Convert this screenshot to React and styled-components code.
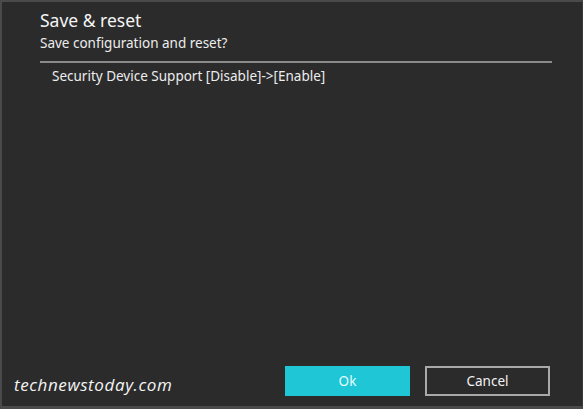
import React from 'react';
import styled, { createGlobalStyle } from 'styled-components';

const Global = createGlobalStyle`
    html, body {
        margin: 0;
        padding: 0;
        background: #2b2b2b;
    }
    body {
        font-family: "Noto Sans", "Open Sans", sans-serif;
    }
`

const Dialog = styled.div`
    box-sizing: border-box;
    width: 583px;
    height: 409px;
    background-color: #2b2b2b;
    border-top: 2px solid #4a4a4a;
    border-left: 2px solid #4a4a4a;
    border-bottom: 3px solid #4a4a4a;
    border-right: 1px solid #3a3a3a;
    display: flex;
    flex-direction: column;
    color: #f2f2f2;
`

const Header = styled.div`
    padding: 7px 30px 0 38px;
`

const Title = styled.h1`
    margin: 0;
    font-size: 17.5px;
    font-weight: 400;
    line-height: 22px;
    color: #f4f4f4;
`

const Subtitle = styled.p`
    margin: 3px 0 0;
    font-size: 13.5px;
    line-height: 18px;
    color: #ededed;
`

const Divider = styled.hr`
    margin: 9px 0 0;
    border: none;
    height: 2px;
    background-color: #8a8a8a;
`

const ChangeList = styled.ul`
    list-style: none;
    margin: 0;
    padding: 4px 0 0 50px;
    flex: 1;
`

const Change = styled.li`
    font-size: 13.5px;
    line-height: 18px;
    color: #ededed;
`

const Footer = styled.div`
    display: flex;
    align-items: center;
    padding: 0 32px 10px 12px;
`

const Watermark = styled.span`
    flex: 1;
    font-family: "Open Sans", sans-serif;
    font-style: italic;
    font-size: 17px;
    color: #f4f4f4;
    padding-top: 6px;
    letter-spacing: 0.6px;
`

const Buttons = styled.div`
    display: flex;
    gap: 15px;
`

const Button = styled.button`
    box-sizing: border-box;
    width: 125px;
    height: 30px;
    font-family: "Noto Sans", sans-serif;
    font-size: 13.5px;
    border-radius: 0;
    cursor: pointer;
    color: ${props => props.primary ? '#e8fbfd' : '#f2f2f2'};
    background-color: ${props => props.primary ? '#1ec6d6' : 'transparent'};
    border: 2px solid ${props => props.primary ? '#1ec6d6' : '#a9a9a9'};
`

const changes = ['Security Device Support [Disable]->[Enable]'];

const App = () => {
    return (
        <>
            <Global />
            <Dialog>
                <Header>
                    <Title>Save &amp; reset</Title>
                    <Subtitle>Save configuration and reset?</Subtitle>
                    <Divider />
                </Header>
                <ChangeList>
                    {changes.map(c => <Change key={c}>{c}</Change>)}
                </ChangeList>
                <Footer>
                    <Watermark>technewstoday.com</Watermark>
                    <Buttons>
                        <Button primary>Ok</Button>
                        <Button>Cancel</Button>
                    </Buttons>
                </Footer>
            </Dialog>
        </>
    );
};

export default App;
